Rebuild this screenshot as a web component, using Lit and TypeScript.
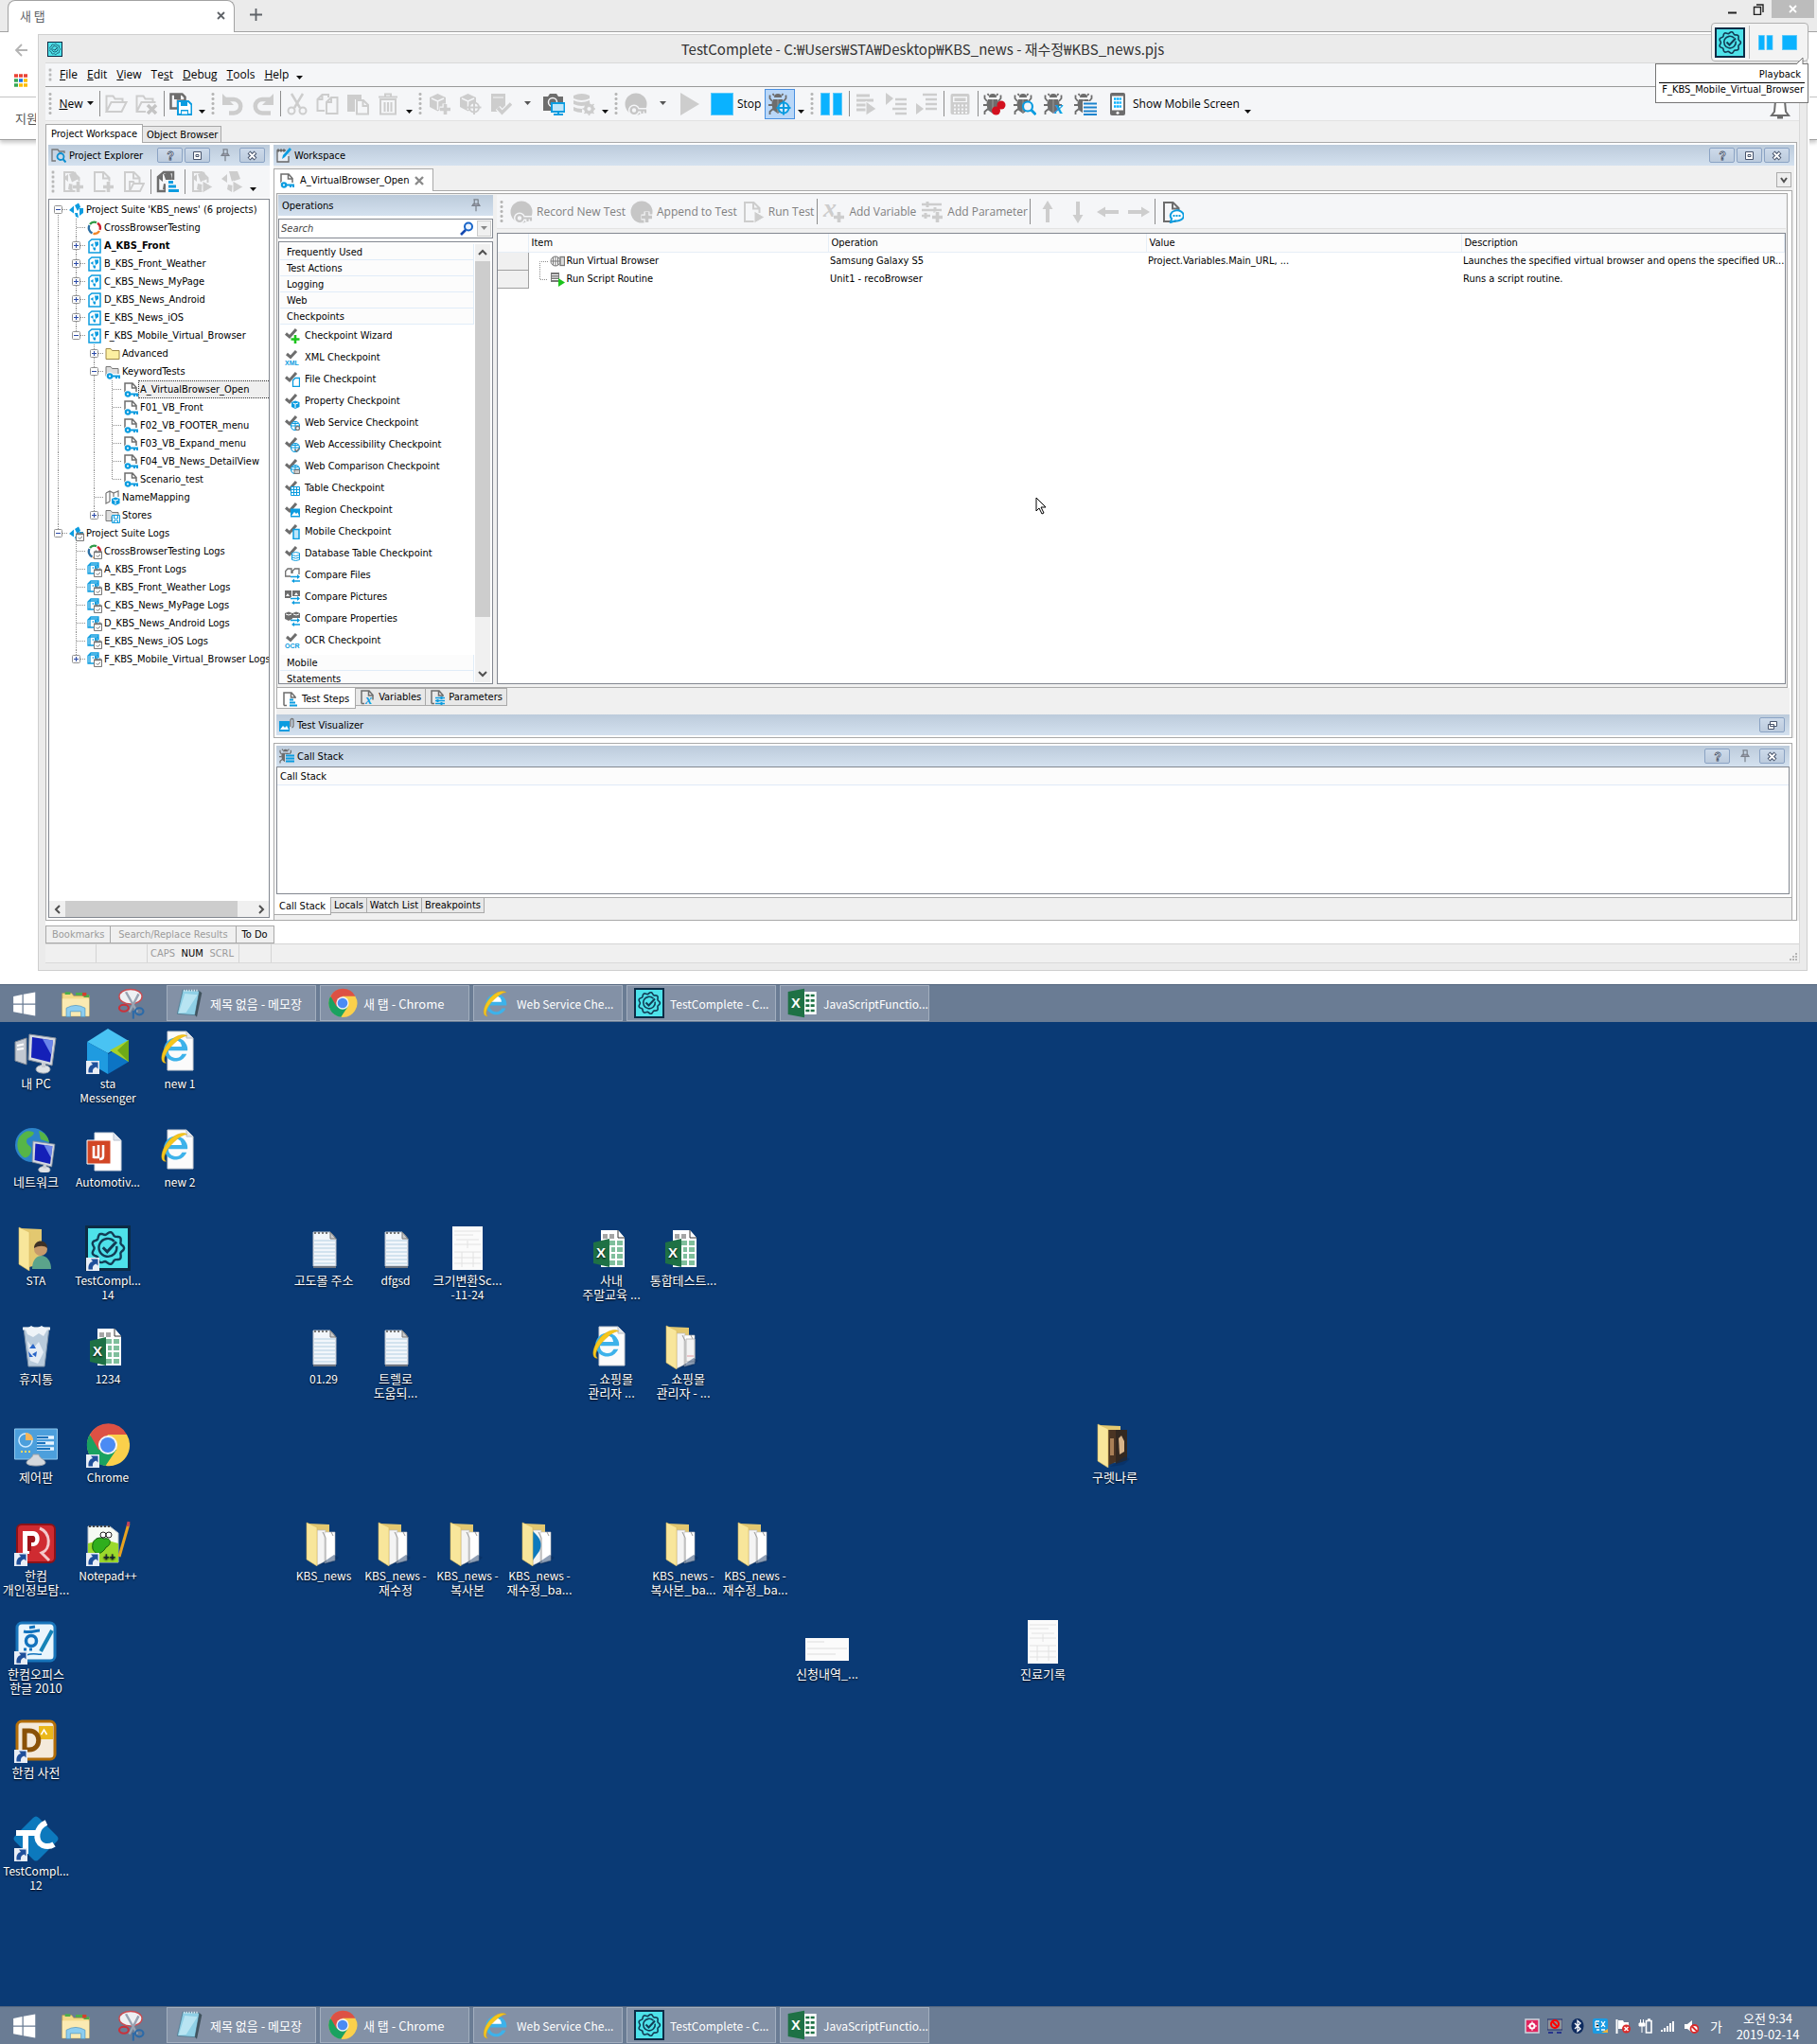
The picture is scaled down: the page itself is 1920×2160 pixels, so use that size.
import { LitElement, html, svg, css, nothing, TemplateResult } from "lit";
import { customElement } from "lit/decorators.js";
import { classMap } from "lit/directives/class-map.js";

const OFF = "#cdcdcd";
const DARK = "#6d6d6d";
const BLUE = "#0b9ce0";

/* ---------- drawing helpers ---------- */

const draw = (content: unknown, size = 24, box = size) =>
  html`<svg class="ico" width=${size} height=${size} viewBox="0 0 ${box} ${box}" aria-hidden="true">${content}</svg>`;

const latin = (text: string) => !/[\uac00-\ud7a3]/.test(text);

const wave = (c: number, r: number, amp: number, lobes: number) => {
  const pts: string[] = [];
  for (let i = 0; i < 96; i++) {
    const t = (i / 96) * Math.PI * 2;
    const k = r + amp * Math.cos(lobes * t);
    pts.push(`${(c + k * Math.cos(t)).toFixed(1)} ${(c + k * Math.sin(t)).toFixed(1)}`);
  }
  return `M${pts.join("L")}Z`;
};

const badge = svg`
  <rect x="1" y="1" width="30" height="30" fill="#4ee2ea" stroke="#0c2b45" stroke-width="2"/>
  <path d=${wave(16, 10.5, 0.9, 9)} fill="none" stroke="#123c55" stroke-width="1.6"/>
  <path d="M20.5 11.2a6.3 6.3 0 1 0 1.7 3.4" fill="none" stroke="#123c55" stroke-width="1.6"/>
  <path d="M12.5 15.5l3 3 6.5-7" fill="none" stroke="#123c55" stroke-width="2"/>`;

const key = (c: string, halo = "#f5f6f8") => svg`
  <path d="M12 18.5h11M18.5 18.5v4M22 18.5v3.5" stroke=${halo} stroke-width="5" fill="none"/>
  <circle cx="10" cy="18.5" r="3.6" fill=${halo} stroke=${halo} stroke-width="5"/>
  <circle cx="10" cy="18.5" r="3.4" fill="none" stroke=${c} stroke-width="2.4"/>
  <path d="M13 18.5h10M18.5 18.5v3.5M22 18.5v3" stroke=${c} stroke-width="2.2" fill="none"/>`;
const page = (c: string) => svg`<path d="M15.5 22H3V2h9.500l6 6v5M12 2.500v6h6" fill="none" stroke=${c} stroke-width="2"/>`;
const plus = (c: string) => svg`<path d="M17.500 11.500v12M11.500 17.500h12" stroke="#f5f6f8" stroke-width="6"/><path d="M17.500 12v11M12 17.500h11" stroke=${c} stroke-width="3.600"/>`;
const play = (c: string) => svg`<path d="M13 11l11 6.500-11 6.500z" fill=${c} stroke="#f5f6f8"/>`;
const cube = (c: string) => svg`<path d="M9.500 1l8.500 4v10l-8.500 4.500L1 15V5z" fill=${c}/><path d="M3 6l6.500 3L16 6M9.500 9v9" stroke="#f5f6f8" stroke-width="1.500" fill="none"/>`;
const flow = (c: string) => svg`<path d="M2 8l5-4v8zM8 4l7-2.500 2 8-6 3z" fill=${c}/><path d="M8 14l5 1-1 7-5-2z" fill=${c}/>`;
const bug = svg`<g fill="#6d6d6d"><path d="M6 5a4 4 0 0 1 8 0zM5 7h10l1.500 4-1 7-5.500 4-5.500-4-1-7z"/></g>
  <path d="M4 9L1.500 6V2.500M16 9l2.500-3V2.500M4 13H0M16 13h3M5 17l-3.500 3v3M6 3L4.500 1M14 3l1.500-2" stroke="#6d6d6d" stroke-width="1.800" fill="none"/><path d="M10 7v15" stroke="#9c9c9c"/>`;
const letterX = (c: string) => svg`<text x="11" y="22" font-family="Liberation Serif, serif" font-size="19" font-style="italic" font-weight="700" fill=${c}>x</text>`;
const steps = svg`<path d="M11 11h8v3h-8zM11 15h10v3h-10zM11 19.500h13v3.500h-13z" fill="#f5f6f8" stroke="#f5f6f8" stroke-width="2"/><path d="M13 11h5v3h-5zM13 15.500h8v3h-8zM13 20h11v3h-11z" fill="#0b9ce0"/>`;
const bars = (c: string) => svg`<path d="M2 3h14M2 8h18M2 13h12M2 18h10" stroke=${c} stroke-width="3"/>`;

const tool: Record<string, unknown> = {
  open: svg`<path d="M1.500 20V3.500h7l2 3h8V10M1.500 20l5-10h16l-5 10z" fill="none" stroke="#cdcdcd" stroke-width="2"/>`,
  closeSuite: svg`<path d="M11 20H1.500V3.500h7l2 3h8V10M1.500 20l5-10h15" fill="none" stroke="#cdcdcd" stroke-width="2"/><path d="M13 13l9 9M22 13l-9 9" stroke="#c4c4c4" stroke-width="3.500"/>`,
  save: svg`<path d="M1.500 1.500h12l3 3v4H9v8H1.500z" fill="none" stroke="#6d6d6d" stroke-width="2.500"/><path d="M5 1h7v6H5z" fill="#6d6d6d"/><path d="M9 9h11l3.500 3.500V23H9z" fill="#fff" stroke="#0b9ce0" stroke-width="2"/><path d="M12 9h7v5h-7zM12 18h8v5h-8z" fill="#0b9ce0"/><path d="M13 19.500h6v3h-6z" fill="#fff"/>`,
  undo: svg`<path d="M4 7h9a7 7 0 0 1 0 14.500H8" fill="none" stroke="#cdcdcd" stroke-width="4.500"/><path d="M1 1v12h12z" fill="#cdcdcd"/>`,
  redo: svg`<path d="M20 7H11a7 7 0 0 0 0 14.500h9" fill="none" stroke="#cdcdcd" stroke-width="4.500"/><path d="M23 1v12H11z" fill="#cdcdcd"/>`,
  cut: svg`<path d="M6 1l9 15M18 1L9 16" stroke="#cdcdcd" stroke-width="2.500"/><circle cx="6" cy="19" r="3.500" fill="none" stroke="#cdcdcd" stroke-width="2"/><circle cx="18" cy="19" r="3.500" fill="none" stroke="#cdcdcd" stroke-width="2"/>`,
  copy: svg`<path d="M9 19H1.500V7l5-5H13v3M6.500 2v5h-5M11 22V10l5-5h6.500v17zM16 5v5h-5" fill="none" stroke="#cdcdcd" stroke-width="2"/>`,
  paste: svg`<path d="M1 2h15v5h-7v13H1z" fill="#cdcdcd"/><path d="M11 8h7l5 5v9.500H11zM17.500 8.500V14h5" fill="#f5f6f8" stroke="#cdcdcd" stroke-width="2"/>`,
  trash: svg`<path d="M4 7h16v15.500H4zM8.500 10v10M12 10v10M15.500 10v10M2 4.500h20M9 4V1.500h6V4" fill="none" stroke="#cdcdcd" stroke-width="2"/>`,
  cubeAdd: svg`${cube(OFF)}${plus(OFF)}`,
  cubeSpy: svg`${cube(OFF)}<circle cx="16" cy="15.500" r="5" fill="#f5f6f8" stroke="#cdcdcd" stroke-width="2"/><path d="M16 8v15M8.500 15.500h15" stroke="#cdcdcd" stroke-width="2"/>`,
  pageCheck: svg`<path d="M2 1h15v19H2z" fill="#cdcdcd"/><path d="M4 5h11" stroke="#f5f6f8"/><path d="M9 16l4.500 5L23 11.500" fill="none" stroke="#f5f6f8" stroke-width="6"/><path d="M9 16l4.500 5L23 11.500" fill="none" stroke="#cdcdcd" stroke-width="3.500"/>`,
  camera: svg`<path d="M1 4h5l2-3h7l2 3h5v6H9v9H1z" fill="#6d6d6d"/><circle cx="11" cy="10" r="4.500" fill="none" stroke="#f5f6f8" stroke-width="1.500"/><path d="M10 11h13.500v9H10z" fill="#bfe6fa" stroke="#0b9ce0" stroke-width="2"/><path d="M17 20v2.500M12 23h10" stroke="#0b9ce0" stroke-width="2"/>`,
  dbGear: svg`<path d="M1 3q9-4 17 0v3q-8 4-17 0zM1 8q8 4 17 0v4q-8 4-17 0zM1 15q4 2 9 2v4q-5 0-9-2z" fill="#cdcdcd"/><circle cx="17.500" cy="17" r="4" fill="#f5f6f8" stroke="#cdcdcd" stroke-width="3"/><path d="M17.500 10v14M10.500 17h14M12.500 12l10 10M22.500 12l-10 10" stroke="#cdcdcd" stroke-width="1.600"/><circle cx="17.500" cy="17" r="2" fill="#f5f6f8"/>`,
  record: svg`<circle cx="12" cy="12" r="11.500" fill="#c6c6c6"/>${key("#c6c6c6")}`,
  append: svg`<circle cx="12" cy="12" r="11.500" fill="#c6c6c6"/>${plus("#c6c6c6")}`,
  play: svg`<path d="M3 0l20 12L3 24z" fill="#cdcdcd"/>`,
  stop: svg`<rect x=".5" y=".5" width="23" height="23" fill="#0ab2ff" stroke="#5cc9fb"/>`,
  pause: svg`<rect x=".5" y=".5" width="9" height="23" fill="#0ab2ff" stroke="#5cc9fb"/><rect x="13.500" y=".5" width="9" height="23" fill="#0ab2ff" stroke="#5cc9fb"/>`,
  bugSpy: svg`${bug}<circle cx="16" cy="16" r="5.500" fill="#d7eafa" stroke="#0b9ce0" stroke-width="2"/><path d="M16 8.500v15M8.500 16h15" stroke="#0b9ce0" stroke-width="2"/>`,
  stepOver: svg`${bars(OFF)}<path d="M12 9l11 8-11 7z" fill="#cdcdcd" stroke="#f5f6f8"/>`,
  stepInto: svg`<path d="M11 7h12M11 12h12M8 17h15M11 22h12" stroke="#cdcdcd" stroke-width="2.500"/><path d="M1 0l8 6-8 7z" fill="#cdcdcd"/>`,
  stepOut: svg`<path d="M8 2h15M11 7h12M11 12h12M11 17h12" stroke="#cdcdcd" stroke-width="2.500"/><path d="M1 11l8 6-8 6z" fill="#cdcdcd"/>`,
  calc: svg`<rect x="1.500" y="1" width="20" height="22" rx="2" fill="#cdcdcd"/><path d="M4 4h15v6H4z" fill="#f5f6f8"/><path d="M5.500 5.500h12V9h-12z" fill="#cdcdcd"/><path d="M5 13.500h14M5 17.500h14M5 21h14" stroke="#f5f6f8" stroke-width="2" stroke-dasharray="2 2"/>`,
  bugStop: svg`${bug}<circle cx="19" cy="13" r="4.500" fill="#d3101f"/><circle cx="13.500" cy="19" r="4.500" fill="#d3101f"/>`,
  bugFind: svg`${bug}<circle cx="15" cy="14.500" r="5" fill="#f5f6f8" stroke="#0b9ce0" stroke-width="2.200"/><path d="M18.500 18l5 5" stroke="#0b9ce0" stroke-width="3"/>`,
  bugVar: svg`${bug}${letterX(BLUE)}`,
  bugList: svg`${bug}<path d="M9 9h15v15H9z" fill="#f5f6f8"/><path d="M10 11.500h14M10 15.500h14M10 19.500h14M10 23h14" stroke="#1c83cd" stroke-width="2.200"/>`,
  phone: svg`<rect x="4" y="0" width="16" height="24" rx="2" fill="#6d6d6d"/><path d="M6 3.500h12v15H6z" fill="#fff"/><path d="M8 6.500h8M8 10.500h8M8 14.500h8" stroke="#0ab2ff" stroke-width="2.500" stroke-dasharray="2.500 .6"/><circle cx="12" cy="21.300" r="1.500" fill="#fff"/>`,
  bell: svg`<path d="M3 19h18l-3-4-1-11H7L6 15z" fill="#fff" stroke="#6d6d6d" stroke-width="2"/><path d="M9 20h6v2.500H9z" fill="#6d6d6d"/>`,
  suiteAdd: svg`${page(OFF)}${flow(OFF)}${plus(OFF)}`,
  itemAdd: svg`${page(OFF)}${plus(OFF)}`,
  itemOpen: svg`${page(OFF)}<path d="M8 22l4-8h11l-4 8zM8 21v-9h4l1 2h7" fill="#f5f6f8" stroke="#cdcdcd" stroke-width="1.800"/>`,
  suiteSteps: svg`<path d="M12 22H2V7l6-5h10v8" fill="none" stroke="#6d6d6d" stroke-width="2.500"/>${flow(DARK)}${steps}`,
  suiteRun: svg`${page(OFF)}${flow(OFF)}${play(OFF)}`,
  flowRun: svg`<path d="M1 9l6-5v9zM9 1h9l3 8-9 3zM8 15l5 1-1 7-5-3z" fill="#cdcdcd"/>${play(OFF)}`,
  pageRun: svg`${page(OFF)}${play(OFF)}`,
  varAdd: svg`<text x="1" y="17" font-family="Liberation Serif, serif" font-size="28" font-style="italic" font-weight="700" fill="#cdcdcd">x</text>${plus(OFF)}`,
  parAdd: svg`<path d="M1 4h21M1 10h21M1 16h9" stroke="#cdcdcd" stroke-width="2.500"/><path d="M7 1v6M15 7v6M5 13v6" stroke="#cdcdcd" stroke-width="3"/>${plus(OFF)}`,
  up: svg`<path d="M12 23V7" stroke="#cdcdcd" stroke-width="4"/><path d="M6.500 9L12 0l5.500 9z" fill="#cdcdcd"/>`,
  down: svg`<path d="M12 1v16" stroke="#cdcdcd" stroke-width="4"/><path d="M6.500 15l5.500 9 5.500-9z" fill="#cdcdcd"/>`,
  left: svg`<path d="M6 12h17" stroke="#cdcdcd" stroke-width="4"/><path d="M9 6.500L0 12l9 5.500z" fill="#cdcdcd"/>`,
  right: svg`<path d="M1 12h17" stroke="#cdcdcd" stroke-width="4"/><path d="M15 6.500l9 5.500-9 5.500z" fill="#cdcdcd"/>`,
  pageTalk: svg`${page(DARK)}<path d="M10 23l1-4a7 5.500 0 1 1 4 2.200z" fill="#fff" stroke="#0b9ce0" stroke-width="2"/><path d="M12.500 16h8" stroke="#0b9ce0" stroke-width="2" stroke-dasharray="2 1"/>`,
};

const swirl = svg`<path d="M0 8l5-4.500v8zM6 3l4-2.500 2 4-3 4.500zM11 6h4v5l-4 3zM6 11h3l1 5-3-1z" fill="#0b9ce0"/>`;
const key16 = svg`<g fill="none"><path d="M2 12.500h14" stroke="#fff" stroke-width="5"/><circle cx="5" cy="12.500" r="2.300" fill="#fff" stroke="#fff" stroke-width="4"/><circle cx="5" cy="12.500" r="2.200" fill="#fff" stroke="#0b9ce0" stroke-width="2.200"/><path d="M7.500 12.500H16M12 12.500V15M15 12.500V15" stroke="#0b9ce0" stroke-width="2"/></g>`;
const tick16 = svg`<path d="M1 5.500l4 3.500 7-8" fill="none" stroke="#6d6d6d" stroke-width="3"/>`;
const swap16 = svg`<path d="M6 9.500h9M8 14h8" stroke="#0b9ce0" stroke-width="1.600"/><path d="M13 7l3 2.500-3 2.500zM10 11.500L7 14l3 2z" fill="#0b9ce0"/>`;
const mapBox = svg`<path d="M7 9l4-1.500L15.500 9v5L11 16l-4-2z" fill="#0b9ce0"/><path d="M8.500 10l2.500 1 3-1M11 11v4" stroke="#fff" fill="none"/>`;
const calBox = svg`<path d="M7.500 8h8v7.500h-8z" fill="#fff" stroke="#777"/><path d="M7 8.500h9M9.500 6.500v2M13.500 6.500v2" stroke="#777" stroke-width="1.500"/><path d="M9.500 12l1.500 1.500 3-2.500" fill="none" stroke="#777"/>`;
const page16 = svg`<path d="M2 14.500V1h8l4 4.500v5M9.500 1v5H14M2 14.500h3" fill="none" stroke="#6d6d6d" stroke-width="1.500"/>`;
const globe16 = svg`<circle cx="11" cy="11" r="4.500" fill="#fff" stroke="#0b9ce0" stroke-width="1.200"/><path d="M6.500 11h9M11 6.500v9M7.500 8.500h7" stroke="#0b9ce0" fill="none"/>`;
const ring = svg`<g fill="none" stroke-width="2.400"><path d="M3 4a6 6 0 0 1 7-1.800" stroke="#2f9a48"/><path d="M11 2.800a6 6 0 0 1 2.500 7" stroke="#cf2030"/><path d="M13 11a6 6 0 0 1-6.500 2.800" stroke="#f0862a"/><path d="M5.500 13.300A6 6 0 0 1 2.500 5" stroke="#2b6fa4"/></g>`;

const small: Record<string, unknown> = {
  suite: swirl,
  ring,
  project: svg`<path d="M2 15V3.500L5 1h9v14z" fill="#fff" stroke="#0b9ce0" stroke-width="1.500"/><path d="M3.500 7l3-2v4zM8 3.500h4V7L9 9zM6 9.500h3v3H7z" fill="#0b9ce0"/>`,
  folder: svg`<path d="M1 13.500v-11h5l1.500 2H15v9z" fill="#fcefa1" stroke="#a08a4a"/>`,
  keyFolder: svg`<path d="M1 12.500v-10h5l1.500 2H14v6" fill="#ddd" stroke="#777"/>${key16}`,
  keyPage: svg`${page16}${key16}`,
  mapping: svg`<path d="M1 3l4-2 4 2 5-2v6M5 1v11M9 3v4M1 3v11l4-2" fill="none" stroke="#777" stroke-width="1.200"/>${mapBox}`,
  stores: svg`<path d="M1 13.500v-11h5l1.500 2H14v4H7v5z" fill="#ddd" stroke="#777"/><path d="M7.500 7.500h8v8h-8z" fill="#fff" stroke="#0b9ce0"/><path d="M9.500 8v3h4V8M9.500 15v-2h4v2" fill="none" stroke="#0b9ce0"/>`,
  suiteLog: svg`${swirl}${calBox}`,
  ringLog: svg`${ring}${calBox}`,
  projectLog: svg`<path d="M4 12H1V4l3-3h8v5M3 3h8v9H3z" fill="#fff" stroke="#0b9ce0" stroke-width="1.300"/><path d="M5 6l2-1v2zM8 4h2v3H8z" fill="#0b9ce0"/>${calBox}`,
  cpWizard: svg`${tick16}<path d="M11 7v9M6.500 11.500h9" stroke="#1cc41c" stroke-width="2.600"/>`,
  cpXml: svg`<path d="M2 4l4 3.500L12 1" fill="none" stroke="#6d6d6d" stroke-width="3"/><text x="0" y="16" font-family="Liberation Sans, sans-serif" font-size="7" font-weight="700" fill="#0b9ce0">XML</text>`,
  cpOcr: svg`<path d="M2 4l4 3.500L12 1" fill="none" stroke="#6d6d6d" stroke-width="3"/><text x="0" y="16" font-family="Liberation Sans, sans-serif" font-size="7" font-weight="700" fill="#0b9ce0">OCR</text>`,
  cpFile: svg`${tick16}<path d="M8.500 15.500V9L11 6.500h4.500v9z" fill="#fff" stroke="#0b9ce0" stroke-width="1.300"/>`,
  cpProp: svg`${tick16}${mapBox}`,
  cpWeb: svg`${tick16}${globe16}<circle cx="13.500" cy="13.500" r="2" fill="#fff" stroke="#777" stroke-width="1.300"/>`,
  cpAccess: svg`${tick16}${globe16}<path d="M10.500 13l2 2 3-3.500" fill="none" stroke="#777" stroke-width="1.500"/>`,
  cpCompare: svg`${tick16}${globe16}<path d="M10 11.500h5.500v4H10z" fill="#ccc" stroke="#777"/>`,
  cpTable: svg`${tick16}<path d="M6.500 6.500h9v9h-9zM6.500 9.500h9M6.500 12.500h9M9.500 6.500v9M12.500 6.500v9" fill="#fff" stroke="#0b9ce0"/>`,
  cpRegion: svg`${tick16}<path d="M6 6.500h10v9H6z" fill="#0b9ce0"/><path d="M7 14l3-4 2 2 1.500-1.500L15 14z" fill="#fff"/>`,
  cpMobile: svg`${tick16}<rect x="9" y="5.500" width="6" height="10" fill="#bfe6fa" stroke="#0b9ce0" stroke-width="1.500"/>`,
  cpDb: svg`${tick16}<path d="M7.500 7.500q4-2 8 0v7q-4 2-8 0zM7.500 9.500q4 2 8 0M7.500 12q4 2 8 0" fill="#fff" stroke="#0b9ce0"/>`,
  cmpFiles: svg`<path d="M6 9H.7V3.500L3 1h4v5M8 6V3.500L10.500 1H15v6" fill="none" stroke="#6d6d6d" stroke-width="1.300"/>${swap16}`,
  cmpPics: svg`<path d="M0 1h7v8H0zM8 1h8v6H8z" fill="#6d6d6d"/><path d="M1 7l2-3 2 3zM10 6l2-3 2 3z" fill="#fff"/><path d="M6 8h10v8H6z" fill="#fff"/>${swap16}`,
  cmpProps: svg`<path d="M0 2l4-1.500L8 2v6l-4 2-4-2zM8 2l4-1.500L16 2v5H8z" fill="#6d6d6d"/><path d="M1 3l3 1 3-1M9 3l3 1 3-1" stroke="#fff" fill="none"/>${swap16}`,
  steps: svg`${page16}<path d="M7 7h10v9H7z" fill="#fff"/><path d="M8 8.500h4M8 11.500h6M8 14.500h8" stroke="#0b9ce0" stroke-width="2"/>`,
  vars: svg`${page16}<text x="6" y="15" font-family="Liberation Serif, serif" font-size="14" font-style="italic" font-weight="700" fill="#0b9ce0">x</text>`,
  params: svg`${page16}<path d="M6 7h10v9H6z" fill="#eee"/><path d="M6 8.500h10M6 11.500h10M6 14.500h10" stroke="#0b9ce0" stroke-width="1.300"/><path d="M12.500 7v3M8.500 10v3M12.500 13v3" stroke="#0b9ce0" stroke-width="2"/>`,
  explorer: svg`<path d="M5 14H1V2h6l1.500 2H14v2" fill="none" stroke="#777" stroke-width="1.300"/><circle cx="10" cy="9.500" r="3.500" fill="none" stroke="#0b8fd0" stroke-width="1.800"/><path d="M12.500 12l3 3.500" stroke="#0b8fd0" stroke-width="2"/>`,
  edit: svg`<path d="M10 3H1v12h12V9" fill="#e9eef4" stroke="#666" stroke-width="1.300"/><path d="M1 3h9" stroke="#666" stroke-width="3" stroke-dasharray="2 1"/><path d="M6 12l1-4 7-8 2 2-7 8z" fill="#0b9ce0"/>`,
  visual: svg`<path d="M0 4h11v11H0z" fill="#0b9ce0"/><path d="M1 13l3-4 2 2 2-2 2 4z" fill="#fff"/><path d="M12 10V3a1.500 1.500 0 0 1 3 0v6a3 3 0 0 1-1.500 2" fill="none" stroke="#777" stroke-width="1.300"/>`,
  bugList: svg`<g transform="scale(.67)">${bug}</g><path d="M6 6h10v10H6z" fill="#ccd9e7"/><path d="M7 7.500h9M7 10.500h9M7 13.500h9" stroke="#0b9ce0" stroke-width="2"/>`,
  rowWeb: svg`<circle cx="6" cy="8" r="5" fill="none" stroke="#777"/><path d="M1 8h10M6 3v10M3.500 4v8M8.500 4v8" stroke="#777"/><rect x="11" y="3.500" width="4.500" height="9" fill="#ddd" stroke="#777" stroke-width="1.300"/>`,
  rowScript: svg`<path d="M1 1h9v10H1z" fill="#777"/><path d="M2 3.500h7M2 6h7M2 8.500h7" stroke="#fff"/><path d="M9 7l7 4.500L9 16z" fill="#1cc41c"/>`,
  pin: svg`<path d="M5 1h6M6 1v6M10.500 1v6M3.500 8.500h9L11 6H5zM8 9v6" fill="#aab" stroke="#7b828c" stroke-width="1.400"/>`,
  lens: svg`<circle cx="10" cy="5.500" r="4" fill="#eaf3ff" stroke="#1764c8" stroke-width="2"/><path d="M7 9l-5 5" stroke="#1448b0" stroke-width="2.600"/>`,
};

/* ---------- desktop art, 48 unit box ---------- */

const shortcut = svg`<path d="M1 34h14v14H1z" fill="#e9eef6"/><path d="M3.500 46.500c-.500-4.500 1-7.500 4.500-8.500l-2-2.500h7.500v7l-2-2c-3 1-4 3-3.500 6z" fill="#1f4f9a"/>`;
const chrome = svg`
  <circle cx="24" cy="24" r="22" fill="#fbd04b"/>
  <path d="M4.500 13.500a22 22 0 0 0 17 32.500L33 29l-9-3z" fill="#1aa260"/>
  <path d="M33.500 29L22 46a22 22 0 0 0 22-33H24z" fill="#fbd04b"/>
  <path d="M24 13h20A22 22 0 0 0 5 13l9.500 16.500z" fill="#dd5144"/>
  <circle cx="24" cy="24" r="10" fill="#f4f4f4"/><circle cx="24" cy="24" r="8" fill="#4b8bf4"/>`;
const ie = svg`
  <path d="M38 26H15a9 9 0 0 0 17 4h5.500A14.500 14.500 0 1 1 38.500 26z" fill="#3db2ea"/>
  <path d="M15.500 21h16a8 8 0 0 0-16 0z" fill="#fff"/>
  <path d="M38 8c-5-4-17 0-25 11S5 42 12 41c-5-3 0-14 8-22S35 7 38 8z" fill="#f6c71c" stroke="#e0a80e" stroke-width=".6"/>`;
const sheet = svg`<path d="M11 3h20l7 7v34H11z" fill="#fbfbfb" stroke="#c9cdd4"/><path d="M31 3v7h7" fill="#e3e6ea" stroke="#b8bcc4"/>`;
const excel = svg`<path d="M13 5h18l7 8v31H13z" fill="#fff"/><path d="M31 5v8h7" fill="#fff" stroke="#333"/>
  <path d="M15 9h5v5h-5zM22 9h5v5h-5z" fill="#a5a5a5"/>
  <path d="M21 16h7v5h-7zM30 16h6v5h-6zM24 23h4v5h-4zM30 23h6v5h-6zM24 30h4v5h-4zM30 30h6v5h-6zM21 37h7v5h-7zM30 37h6v5h-6z" fill="#7fbf9c"/>
  <path d="M5 18l17-4v30L5 40z" fill="#1e7145"/><text x="8" y="34" font-family="Liberation Sans, sans-serif" font-size="15" font-weight="700" fill="#fff">X</text>`;
const folderArt = (inner: unknown) => svg`<g transform="translate(-4 0)">
  <path d="M12 3l22 1v37l-18 4z" fill="#e3c870"/>${inner}
  <path d="M10 2l11 5v41l-11-7z" fill="#f8e69b" stroke="#d8bb60" stroke-width=".6"/><path d="M39 36l5 3-7 6-14 2z" fill="#062a5c" opacity=".45"/></g>`;
const papers = svg`<path d="M21 10h9v33l-9 4z" fill="#f4f4f4" stroke="#bbb" stroke-width=".6"/><path d="M29 12h11v30l-11 3z" fill="#fff" stroke="#bbb" stroke-width=".6"/><path d="M27 12l3 6v26M36 12l2 4" fill="none" stroke="#999"/>`;
const notes = svg`<path d="M13 7h18l6 7v29H13z" fill="#f2f6fb" stroke="#b7bfca"/><path d="M14 16h22M14 20h22M14 24h22M14 28h22M14 32h22M14 36h22M14 40h22" stroke="#b3cfe2"/><path d="M13 44h24" stroke="#6f7681" stroke-width="2"/><path d="M31 7v7h6z" fill="#ccc" stroke="#777"/><path d="M14 8h16" stroke="#777" stroke-width="2" stroke-dasharray="2 2"/>`;
const monitor = svg`<path d="M17 6l28 4-4 29-25-6z" fill="#d4d9e0" stroke="#868e9a"/><path d="M20 9l22 3.500-3 23-20-5z" fill="#1420b8"/><path d="M31 11l11 1.500-2 15z" fill="#8fb0ff" opacity=".7"/><path d="M24 43c0-6 15-6 15 0s-15 5-15 0z" fill="#dfe2e6" stroke="#9aa1ab"/><path d="M30 36h4v5h-4z" fill="#c8ccd3"/>`;

const big: Record<string, unknown> = {
  pc: svg`<path d="M2 14l12-4v28L2 34z" fill="#c3c9d2" stroke="#7f8793"/><path d="M4 18l7-1.500M4 22l7-1" stroke="#fff" stroke-width="2"/>${monitor}`,
  network: svg`<circle cx="20" cy="19" r="18" fill="#2c83c9"/><path d="M6 11c6-8 12-8 16-5-2 6-8 4-8 9s6 4 5 10-5 8-8 7C4 27 3 18 6 11zM27 4c7 2 10 7 11 12l-9-3z" fill="#56b547"/><g transform="translate(7 10) scale(.82)">${monitor}</g>`,
  user: svg`${folderArt(nothing)}<path d="M20 46c0-10 5-14 10-14s10 5 10 14z" fill="#5ba48b"/><circle cx="29" cy="25" r="7" fill="#c79a6b"/><path d="M22 24c0-10 14-10 14 0-3-3-9-3-14 0z" fill="#3d3126"/>`,
  bin: svg`<path d="M11 4h27l-5 41H16z" fill="#b9cbdc" stroke="#7e92a8"/><path d="M10 5h29" stroke="#e9eef3" stroke-width="3"/><path d="M13 6l6-4 5 3 6-3 6 4-4 7-5-3-6 4-6-3z" fill="#eef3f8"/><path d="M15 18l6 8 6-7 5 11-6 12-8-3z" fill="#e6edf5"/><path d="M17 26l4-5 3 5zM16 29l5 6h-4zM25 29l-1 6-4-3z" fill="#2b66c8"/>`,
  control: svg`<path d="M1.500 7h45v32h-45z" fill="#4c9fdc" stroke="#8ec8ef"/><circle cx="13" cy="19" r="7" fill="none" stroke="#cfeaff" stroke-width="1.500"/><path d="M13 19v-8a8 8 0 0 1 8 8z" fill="#f6b65b"/><path d="M25 16h18M25 22h18M25 28h18" stroke="#e6f4ff" stroke-width="3.500"/><path d="M25 16h12M25 22h9M25 28h14" stroke="#1b73bd" stroke-width="1.800"/><path d="M8 31h12" stroke="#ffd95e" stroke-width="2" stroke-dasharray="2 2"/><path d="M14 43c0-4 6-4 7-9h6c1 5 7 5 7 9s-20 4-20 0z" fill="#d4d8dd" stroke="#9aa1ab"/>`,
  hancomP: svg`<rect x="4" y="4" width="40" height="40" rx="5" fill="#cf2b31" stroke="#8c1218" stroke-width="2"/><path d="M10 11h11c9 0 9 16 0 16h-4v8h-7z" fill="#fff"/><path d="M15 16h6c3 0 3 7 0 7h-2v9h-4z" fill="#9e1319"/><path d="M28 8c12 5 12 22 2 26l8 8" fill="none" stroke="#f4c9cb" stroke-width="3"/>${shortcut}`,
  hangul: svg`<rect x="4" y="4" width="40" height="40" rx="5" fill="#eaf6fd" stroke="#1875bb" stroke-width="3"/><circle cx="19" cy="23" r="5.500" fill="none" stroke="#1273bd" stroke-width="3.500"/><path d="M11 13c8 2 12-1 17-1M17 9l6-1" stroke="#1273bd" stroke-width="3" fill="none"/><path d="M11 32h3M17 32h3" stroke="#1273bd" stroke-width="3"/><path d="M29 34l12-22" stroke="#1584b8" stroke-width="4"/><path d="M14 38c8-3 12 0 16-1" stroke="#1273bd" fill="none" stroke-width="1.500"/>${shortcut}`,
  dict: svg`<rect x="4" y="4" width="40" height="40" rx="5" fill="#f4eadb" stroke="#b26d08" stroke-width="3"/><path d="M27 9h15v14H27z" fill="#eab71b"/><path d="M29.500 18l3-5 3 5" fill="none" stroke="#fff" stroke-width="1.500"/><path d="M12 14h5c13 0 13 20 0 20h-5z" fill="none" stroke="#8a5208" stroke-width="5"/>${shortcut}`,
  tc12: svg`<path d="M21 2q3-3 6 0l19 19q3 3 0 6L27 46q-3 3-6 0L2 27q-3-3 0-6z" fill="#0c79bd"/><path d="M3 18h21M13 18v22" stroke="#fff" stroke-width="6"/><path d="M35 7c-11 5-13 19-4 24 5 2 9 1 12-1" fill="none" stroke="#fff" stroke-width="6"/>${shortcut}`,
  sta: svg`<path d="M24 0l22 13-22 13L2 14z" fill="#49c3f3"/><path d="M2 14l22 12v22L2 35z" fill="#1f9be0"/><path d="M46 14L24 27v21l22-13z" fill="#0c74c4"/><path d="M46 12v23L26 23z" fill="#a6d12b"/><path d="M46 12v23L34 23z" fill="#6faa17"/>${shortcut}`,
  ppt: svg`<path d="M10 6h20l8 8v32H10z" fill="#fff" stroke="#cdd3dc"/><path d="M30 6v8h8" fill="#dfe5ee" stroke="#b9c2d0"/><path d="M2 14h25v25H2z" fill="#d24625" stroke="#fff"/><path d="M9 20v13M9 32h5V19M19 19v12q0 3-4 3" stroke="#fff" stroke-width="2.600" fill="none"/>`,
  tc14: svg`<g transform="scale(1.5)">${badge}</g>${shortcut}`,
  excel,
  chrome: svg`${chrome}${shortcut}`,
  npp: svg`<path d="M3 6h23l9 7v31H3z" fill="#f6faf3" stroke="#b7bfca"/><path d="M4 6h22" stroke="#444" stroke-width="2" stroke-dasharray="2 2"/><path d="M3 24q16-6 32 0v20H3z" fill="#9bd92c"/><path d="M8 30c-2-10 6-14 12-11 8-2 8 7 2 9-3 6-10 10-14 2z" fill="#2fae1d" stroke="#0f5b0c"/><circle cx="19" cy="15" r="3" fill="#fff" stroke="#222"/><circle cx="25" cy="15" r="3" fill="#fff" stroke="#222"/><path d="M46 3L36 38" stroke="#e8a320" stroke-width="3"/><path d="M46 1l-1 5" stroke="#c4425a" stroke-width="3"/><text x="19" y="42" font-family="Liberation Sans, sans-serif" font-size="11" font-weight="700" fill="#123">++</text>${shortcut}`,
  web: svg`${sheet}<g transform="translate(-1 1) scale(.86)">${ie}</g>`,
  notes,
  scan: svg`<path d="M8 1h32v46H8z" fill="#fbfbfb"/><path d="M10 6h28M10 10h20M12 15h24M10 20h28M24 16v8M10 28h28M10 34h28M10 40h28M18 28v16M30 28v16" stroke="#e2e2e2"/>`,
  wide: svg`<path d="M1 20h46v24H1z" fill="#fbfbfb"/><path d="M3 24h18M3 31h42M3 37h30" stroke="#ddd"/>`,
  folder: folderArt(papers),
  folderShop: folderArt(svg`${papers}<path d="M31 16h9v24h-9z" fill="#f3f3f3" stroke="#bbb"/><path d="M32 34h7" stroke="#e39aa2"/>`),
  folderBlue: folderArt(svg`${papers}<path d="M21 11c9 8 10 14 7 21l-7 10z" fill="#0c79bd"/>`),
  folderPhoto: folderArt(svg`<path d="M20 8h9v34l-9 4z" fill="#4a3423"/><path d="M29 8h12v32l-12 4z" fill="#332820"/><path d="M32 17l3-3 3 6v11l-5 3z" fill="#d8b48a"/><path d="M23 17h4v18h-4z" fill="#a97f56"/>`),
};

const task: Record<string, unknown> = {
  notes: svg`<path d="M14 3l26 2-7 38-28-2z" fill="#8fd0e6" stroke="#3f6c83"/><path d="M40 5l4 3-8 38-3-3z" fill="#41535e"/><path d="M15 4h24" stroke="#d9e7ee" stroke-width="3" stroke-dasharray="2 2"/><path d="M17 9l20 2-18 28-12 1z" fill="#c9ecf6" opacity=".7"/>`,
  chrome,
  ie: svg`<g transform="translate(-3 -2) scale(1.14)">${ie}</g>`,
  tc: svg`<g transform="scale(1.5)">${badge}</g>`,
  excel: svg`<path d="M26 6h20v36H26z" fill="#fff"/><path d="M29 10h6v4h-6zM37 10h6v4h-6zM29 18h6v4h-6zM37 18h6v4h-6zM29 26h6v4h-6zM37 26h6v4h-6zM29 34h6v4h-6zM37 34h6v4h-6z" fill="#1e7145"/><path d="M1 6l26-5v46L1 42z" fill="#1e7145"/><text x="6" y="32" font-family="Liberation Sans, sans-serif" font-size="22" font-weight="700" fill="#fff">X</text>`,
  start: svg`<path d="M5 11l15-3v15H5zM22 7.500L42 4v19H22zM5 25h15v15L5 37zM22 25h20v19l-20-3.500z" fill="#fff"/>`,
  files: svg`<path d="M4 8h14l3 4h23v30H4z" fill="#f4d988" stroke="#c9a64c"/><path d="M8 6h8v4H8zM24 7h10v4H24zM36 10h8v4h-8z" fill="#4cae4a"/><path d="M34 7h6v5h-6z" fill="#d3402d"/><path d="M4 16h40v26H4z" fill="#fbeab2"/><path d="M10 43V30q14-8 28 0v13h-6V35H16v8z" fill="#8ccdf0" stroke="#4a94c3"/>`,
  snip: svg`<ellipse cx="24" cy="13" rx="17" ry="11" fill="#eef0f3" stroke="#c94a50" stroke-width="2"/><path d="M17 6l17 30M36 9L22 36" stroke="#99a3b2" stroke-width="3.500"/><ellipse cx="14" cy="30" rx="7" ry="5" fill="none" stroke="#c9323b" stroke-width="3"/><ellipse cx="37" cy="35" rx="6" ry="5" fill="none" stroke="#2c6aa8" stroke-width="3"/><path d="M28 34v12" stroke="#2c6aa8" stroke-width="3"/>`,
};

/* ---------- data ---------- */

type Node = [guides: string, box: string, icon: string, label: string, flag?: string];
const TREE: Node[] = [
  ["F", "-", "suite", "Project Suite 'KBS_news' (6 projects)"],
  ["|T", "", "ring", "CrossBrowserTesting"],
  ["|T", "+", "project", "A_KBS_Front", "bold"],
  ["|T", "+", "project", "B_KBS_Front_Weather"],
  ["|T", "+", "project", "C_KBS_News_MyPage"],
  ["|T", "+", "project", "D_KBS_News_Android"],
  ["|T", "+", "project", "E_KBS_News_iOS"],
  ["|L", "-", "project", "F_KBS_Mobile_Virtual_Browser"],
  ["| T", "+", "folder", "Advanced"],
  ["| T", "-", "keyFolder", "KeywordTests"],
  ["| |T", "", "keyPage", "A_VirtualBrowser_Open", "picked"],
  ["| |T", "", "keyPage", "F01_VB_Front"],
  ["| |T", "", "keyPage", "F02_VB_FOOTER_menu"],
  ["| |T", "", "keyPage", "F03_VB_Expand_menu"],
  ["| |T", "", "keyPage", "F04_VB_News_DetailView"],
  ["| |L", "", "keyPage", "Scenario_test"],
  ["| T", "", "mapping", "NameMapping"],
  ["| L", "+", "stores", "Stores"],
  ["L", "-", "suiteLog", "Project Suite Logs"],
  [" T", "", "ringLog", "CrossBrowserTesting Logs"],
  [" T", "", "projectLog", "A_KBS_Front Logs"],
  [" T", "", "projectLog", "B_KBS_Front_Weather Logs"],
  [" T", "", "projectLog", "C_KBS_News_MyPage Logs"],
  [" T", "", "projectLog", "D_KBS_News_Android Logs"],
  [" T", "", "projectLog", "E_KBS_News_iOS Logs"],
  [" L", "+", "projectLog", "F_KBS_Mobile_Virtual_Browser Logs"],
];

const CHECKPOINTS = [
  ["cpWizard", "Checkpoint Wizard"], ["cpXml", "XML Checkpoint"], ["cpFile", "File Checkpoint"],
  ["cpProp", "Property Checkpoint"], ["cpWeb", "Web Service Checkpoint"], ["cpAccess", "Web Accessibility Checkpoint"],
  ["cpCompare", "Web Comparison Checkpoint"], ["cpTable", "Table Checkpoint"], ["cpRegion", "Region Checkpoint"],
  ["cpMobile", "Mobile Checkpoint"], ["cpDb", "Database Table Checkpoint"], ["cmpFiles", "Compare Files"],
  ["cmpPics", "Compare Pictures"], ["cmpProps", "Compare Properties"], ["cpOcr", "OCR Checkpoint"],
];

const DESKTOP: [col: number, row: number, icon: string, label: string][] = [
  [1, 1, "pc", "내 PC"], [2, 1, "sta", "sta\nMessenger"], [3, 1, "web", "new 1"],
  [1, 2, "network", "네트워크"], [2, 2, "ppt", "Automotiv..."], [3, 2, "web", "new 2"],
  [1, 3, "user", "STA"], [2, 3, "tc14", "TestCompl...\n14"], [5, 3, "notes", "고도몰 주소"], [6, 3, "notes", "dfgsd"],
  [7, 3, "scan", "크기변환Sc...\n-11-24"], [9, 3, "excel", "사내\n주말교육 ..."], [10, 3, "excel", "통합테스트..."],
  [1, 4, "bin", "휴지통"], [2, 4, "excel", "1234"], [5, 4, "notes", "01.29"], [6, 4, "notes", "트렐로\n도움되..."],
  [9, 4, "web", "_ 쇼핑몰\n관리자 ..."], [10, 4, "folderShop", "_ 쇼핑몰\n관리자 - ..."],
  [1, 5, "control", "제어판"], [2, 5, "chrome", "Chrome"], [16, 5, "folderPhoto", "구렛나루"],
  [1, 6, "hancomP", "한컴\n개인정보탐..."], [2, 6, "npp", "Notepad++"], [5, 6, "folder", "KBS_news"],
  [6, 6, "folder", "KBS_news -\n재수정"], [7, 6, "folder", "KBS_news -\n복사본"], [8, 6, "folderBlue", "KBS_news -\n재수정_ba..."],
  [10, 6, "folder", "KBS_news -\n복사본_ba..."], [11, 6, "folder", "KBS_news -\n재수정_ba..."],
  [1, 7, "hangul", "한컴오피스\n한글 2010"], [12, 7, "wide", "신청내역_..."], [15, 7, "scan", "진료기록"],
  [1, 8, "dict", "한컴 사전"], [1, 9, "tc12", "TestCompl...\n12"],
];

const MENUS: [string, string, string][] = [
  ["", "F", "ile"], ["", "E", "dit"], ["", "V", "iew"], ["Te", "s", "t"], ["", "D", "ebug"], ["", "T", "ools"], ["", "H", "elp"],
];

const BAR = "| New / open closeSuite / save . | undo redo / cut copy paste trash . | cubeAdd cubeSpy pageCheck v camera dbGear . | record v play Stop bugSpy . | pause / stepOver stepInto stepOut / calc / bugStop bugFind bugVar bugList Phone .";

/* ---------- shared pieces ---------- */

const shared = css`
  * { box-sizing: border-box; }
  .ico { display: block; flex: none; }
  button { font: inherit; color: inherit; background: none; border: 0; padding: 0; margin: 0; }
  .row { display: flex; }
  .latin { font-size: 12px; }
`;

@customElement("task-bar")
class TaskBar extends LitElement {
  static properties = { tray: { type: Boolean } };
  declare tray: boolean;

  static styles = [shared, css`
    :host { display: flex; height: 40px; flex: none; align-items: stretch; background: #6a7c94; border-top: 1px solid #55677f;
      font: 13px "Noto Sans CJK KR", sans-serif; color: #fff; }
    .quick { width: 58px; display: grid; place-items: center; }
    .quick:first-child { width: 51px; }
    .list { display: flex; gap: 4px; padding-left: 9px; }
    .app { width: 158px; display: flex; align-items: center; gap: 6px; padding: 0 7px; border: 1px solid #a3afbf;
      background: #8391a6; white-space: nowrap; text-align: left; margin-bottom: 1px; }
    .tray { margin-left: auto; display: flex; align-items: center; gap: 8px; padding-right: 17px; }
    .clock { width: 70px; text-align: center; line-height: 17px; margin-left: 5px; }
    .ime { font-size: 14px; margin-left: 4px; }
  `];

  render() {
    const apps = [["notes", "제목 없음 - 메모장"], ["chrome", "새 탭 - Chrome"], ["ie", "Web Service Che..."], ["tc", "TestComplete - C..."], ["excel", "JavaScriptFunctio..."]];
    return html`
      <button class="quick" aria-label="Start">${draw(task.start, 30, 48)}</button>
      <button class="quick" aria-label="Files">${draw(task.files, 34, 48)}</button>
      <button class="quick" aria-label="Snipping tool">${draw(task.snip, 34, 48)}</button>
      <nav class="list">${apps.map(([i, t]) => html`<button class="app">${draw(task[i], 32, 48)}<span class=${classMap({ latin: latin(t) })}>${t}</span></button>`)}</nav>
      ${this.tray ? this.renderTray() : nothing}`;
  }

  renderTray() {
    return html`<div class="tray">
      ${draw(svg`<path d="M1 1h14v14H1z" fill="#e0245e" stroke="#cfd6df" stroke-width="1.500"/><circle cx="8" cy="8" r="2.500" fill="none" stroke="#fff" stroke-width="2"/><path d="M8 3v2M8 11v2M3 8h2M11 8h2" stroke="#fff"/>`, 16)}
      ${draw(svg`<path d="M0 1h16v11H0z" fill="#8f9298" stroke="#1f2d6f"/><circle cx="8" cy="6" r="4" fill="none" stroke="#f00" stroke-width="2"/><path d="M5 3l6 6" stroke="#f00" stroke-width="2"/><path d="M1 15h5M10 15h5" stroke="#111c8a" stroke-width="1.500"/>`, 16)}
      ${draw(svg`<ellipse cx="8" cy="8" rx="6.500" ry="8" fill="#0e2b5f"/><path d="M5 5l6 6-3 2.500v-11L11 5l-6 6" fill="none" stroke="#fff" stroke-width="1.300"/>`, 16)}
      ${draw(svg`<rect width="16" height="16" rx="2" fill="#1b9be3"/><path d="M3 3h4M3 6h3M3 3v6h4M9 3l4 6M13 3L9 9M4 12h3M9 12h4" stroke="#fff" stroke-width="1.300"/><path d="M9 15h7v-4z" fill="#f0b03a"/>`, 16)}
      ${draw(svg`<path d="M1.500 1v15" stroke="#fff" stroke-width="2"/><path d="M3 2h5l1 2h5v7H3z" fill="#fff"/><circle cx="11.500" cy="11" r="4.500" fill="#d92b2b"/><path d="M9.500 9l4 4M13.500 9l-4 4" stroke="#fff" stroke-width="1.500"/>`, 16)}
      ${draw(svg`<path d="M8.500 2.500h5.500V15H8.500zM10 1h3" fill="#6a7c94" stroke="#fff" stroke-width="1.600"/><path d="M2.500 1v4M5.500 1v4M1 5h6v3H1zM4 8v7" stroke="#fff" fill="#fff"/>`, 16)}
      ${draw(svg`<path d="M1 14v-2M4 14v-4M7 14V8M10 14V5M13 14V3" stroke="#fff" stroke-width="2"/>`, 16)}
      ${draw(svg`<path d="M1 6h3l5-4v13l-5-4H1z" fill="#fff"/><circle cx="11.500" cy="11" r="4" fill="#fff" stroke="#d92b2b" stroke-width="1.800"/><path d="M9 8.500l5 5" stroke="#d92b2b" stroke-width="1.800"/>`, 16)}
      <span class="ime">가</span>
      <div class="clock">오전 9:34<br>2019-02-14</div>
    </div>`;
  }
}

@customElement("app-root")
class AppRoot extends LitElement {
  static styles = [shared, css`
    :host { display: flex; flex-direction: column; min-height: 100vh; overflow: hidden; color: #000;
      font: 11px/13px "DejaVu Sans Condensed", "Noto Sans", sans-serif; }
    .screen { flex: 1 0 auto; min-height: 50vh; display: flex; flex-direction: column; position: relative; }
    .ui { font: 12px/16px "Open Sans", "Noto Sans", sans-serif; }
    .ko { font-family: "Noto Sans CJK KR", sans-serif; }

    /* browser behind */
    .browser { flex: 1; background: #fff; position: relative; }
    .strip { height: 34px; background: #ebebeb; border-bottom: 1px solid #a2a2a2; display: flex; align-items: flex-start; padding-left: 8px; }
    .btab { width: 240px; height: 34px; border: 1px solid #a2a2a2; border-bottom: 0; border-radius: 8px 8px 0 0; background: #fff;
      display: flex; align-items: center; justify-content: space-between; padding: 0 9px 2px 12px; font-size: 13px; color: #5f6368; }
    .newtab { margin: 9px 0 0 16px; }
    .wctl { margin-left: auto; display: flex; align-items: flex-start; padding-right: 3px; }
    .wctl button { height: 19px; width: 28px; display: grid; place-items: center; }
    .wctl .x { width: 45px; background: #bcbcbc; }
    .bnav { height: 69px; padding: 12px 0 0 15px; border-bottom: 1px solid #c4c4c4; display: flex; flex-direction: column; gap: 18px; }
    .bmark { height: 45px; border-bottom: 1px solid #a0a0a0; box-shadow: 0 3px 4px #ccc; padding: 13px 16px; font-size: 13px; line-height: 18px; color: #555; }

    /* main window */
    .win { position: absolute; inset: 36px 10px 14px 40px; border: 1px solid #cfcfcf; background: #ebebeb; padding: 0 7px 7px;
      display: flex; flex-direction: column; outline: 2px solid #fff; }
    .title { height: 29px; display: flex; align-items: center; position: relative; padding-left: 2px; flex: none; }
    .title h1 { flex: 1; margin: 0; font-size: 15px; font-weight: 400; text-align: center; color: #333; padding-right: 18px; }
    .client { flex: 1; display: flex; flex-direction: column; background: #f0f0f0; min-height: 0; border: solid #d9d9d9; border-width: 1px 1px 1px 0; }
    .menu { height: 25px; background: #f5f6f8; border-bottom: 1px solid #999; display: flex; align-items: center; flex: none; }
    .menu .entry { padding: 0 5px; }
    .bar { height: 36px; background: #f5f6f8; border-bottom: 1px solid #e3e3e3; display: flex; align-items: center; flex: none; }
    .grip { width: 10px; align-self: stretch; margin: 4px 0; flex: none; background: radial-gradient(circle, #b4b4b4 1px, transparent 2px) center / 4px 5px repeat-y; }
    .sep { width: 4px; align-self: stretch; margin: 4px 0; flex: none; background: linear-gradient(#8c8c8c, #8c8c8c) center / 1px 100% no-repeat; }
    .tb { width: 32px; height: 32px; display: grid; place-items: center; flex: none; }
    .tb.on { background: #b9d7f8; border: 1px solid #4a90e0; }
    .ovf { width: 13px; align-self: stretch; display: grid; place-items: end center; padding-bottom: 5px; flex: none; }
    .drop { width: 24px; display: grid; place-items: center; flex: none; }
    .wide { display: flex; align-items: center; white-space: nowrap; gap: 4px; }
    .new { width: 45px; justify-content: center; }
    .stopb { width: 64px; padding-left: 7px; }
    .phoneb { padding: 0 2px 0 6px; }
    .bellb { margin-left: auto; padding-right: 8px; align-self: flex-end; }

    .tabs { display: flex; align-items: flex-end; flex: none; }
    .tab { border: 1px solid #a9a9a9; background: #e8e8e8; padding: 0 3px 0 4px; height: 17px; display: flex; align-items: center; gap: 5px; white-space: nowrap; }
    .tab + .tab { margin-left: -1px; }
    .tab.cur { background: #fff; }
    .top { height: 23px; padding-top: 3px; margin-bottom: -1px; position: relative; }
    .top .tab { height: 18px; }
    .top .tab.cur { height: 20px; border-bottom: 0; padding: 0 5px; }

    .bench { flex: 1; min-height: 0; display: grid; grid-template-columns: 234px minmax(0, 1fr); grid-template-rows: minmax(0, 1fr); gap: 4px; background: #fff; padding: 2px 2px 0;
      margin-right: 2px; border: 1px solid #a9a9a9; }
    .head { height: 22px; background: linear-gradient(#bccbdb, #d4e1ef); display: flex; align-items: center; padding: 0 5px 0 3px; gap: 2px; flex: none; }
    .head b { font-weight: 400; flex: 1; padding-left: 1px; white-space: nowrap; }
    .hb { width: 27px; height: 16px; border: 1px solid #8ba3c4; border-radius: 2px; background: linear-gradient(#cddaea, #bccbdd); display: grid; place-items: center; }
    .pin { width: 27px; display: grid; place-items: center; }

    .explorer { display: flex; flex-direction: column; min-height: 0; padding-bottom: 2px; }
    .explorer .bar { height: 34px; border: 0; margin-bottom: 1px; }
    .tree { flex: 1; min-height: 0; border: 1px solid #828790; background: #fff; display: flex; flex-direction: column; }
    .nodes { flex: 1; overflow: hidden; padding-top: 1px; }
    .node { display: flex; height: 19px; align-items: center; white-space: nowrap; }
    .cell { width: 19px; height: 19px; flex: none; display: grid; place-items: center; }
    .lab { padding: 0 0 0 1px; height: 19px; line-height: 19px; margin-left: -1px; border: 1px solid transparent; display: flex; align-items: center; }
    .lab.bold { font-weight: 700; }
    .lab.picked { flex: 1; background: #efefef; border: 1px dotted #333; border-right: 0; }
    .hscroll { height: 17px; background: #f0f0f0; display: grid; grid-template-columns: 17px 182px 1fr 17px; place-items: center; flex: none; }
    .thumb { background: #cdcdcd; width: 100%; height: 100%; }

    .right { display: flex; flex-direction: column; min-width: 0; min-height: 0; gap: 5px; }
    .space { flex: 1; display: flex; flex-direction: column; background: #f0f0f0; min-height: 0; }
    .doctabs { height: 27px; display: flex; align-items: flex-end; padding-right: 3px; margin-bottom: -1px; position: relative; flex: none; }
    .doctab { width: 169px; height: 24px; background: #fff; border: 1px solid #a9a9a9; border-bottom: 0; display: flex; align-items: center; padding-left: 5px; gap: 6px; }
    .chev { width: 16px; height: 16px; border: 1px solid #acacac; background: #eee; display: grid; place-items: center; margin: 0 0 4px auto; }
    .doc { flex: 1; min-height: 0; border: 1px solid #a9a9a9; background: #fff; padding: 2px; display: flex; flex-direction: column; margin-right: 2px; }
    .inner { flex: 1; min-height: 0; border: 1px solid #a9a9a9; background: #f0f0f0; padding: 1px 1px 3px; display: flex; gap: 4px; margin-right: 2px; }
    .ops { width: 227px; display: flex; flex-direction: column; background: #fff; min-height: 0; flex: none; }
    .search { height: 21px; margin: 3px 0; border: 1px solid #828790; display: flex; align-items: center; padding: 1px 1px 1px 2px; background: #fff; flex: none; }
    .search input { flex: 1; min-width: 0; border: 0; outline: 0; padding: 0; font: italic 11px "DejaVu Sans Condensed", "Noto Sans", sans-serif; background: none; }
    .search input::placeholder { color: #444; opacity: 1; }
    .search .dd { width: 15px; height: 17px; margin-left: 3px; border: 1px solid #ccc; background: #f0f0f0; display: grid; place-items: center; }
    .lib { flex: 1; min-height: 0; border: 1px solid #828790; display: flex; padding: 2px 1px 1px; }
    .cats { flex: 1; overflow: hidden; }
    .cat { display: block; width: 100%; height: 17px; text-align: left; padding-left: 7px; background: #fcfcfc; border: solid #e0ecf8; border-width: 0 1px 1px 0; }
    .items { padding: 0 0 4px 5px; }
    .item { display: flex; align-items: center; gap: 5px; height: 23px; width: 100%; text-align: left; white-space: nowrap; }
    .vscroll { width: 16px; margin: 0 1px; background: #f0f0f0; display: grid; grid-template-rows: 18px 376px 1fr 18px; place-items: center; }

    .stepsp { flex: 1; min-width: 0; display: flex; flex-direction: column; }
    .stepsp .bar { height: 36px; margin-bottom: 4px; color: #808080; }
    .stepsp .wide { gap: 0; padding-right: 1px; }
    .gridbox { flex: 1; border: 1px solid #828790; background: #fff; overflow: hidden; }
    table { border-collapse: collapse; table-layout: fixed; width: 100%; }
    th { font-weight: 400; text-align: left; height: 19px; background: #fcfcfc; border: solid #e6eef7; border-width: 0 1px 1px 0; padding: 0 3px; }
    td { height: 19px; padding: 0 2px; white-space: nowrap; }
    td.hd { background: #f0f0f0; border: solid #a0a0a0; border-width: 0 1px 1px 0; }
    td .row { align-items: center; gap: 2px; }
    .c0 { width: 32px; } .c1 { width: 317px; } .c2 { width: 336px; } .c3 { width: 333px; }

    .under { height: 28px; background: #f0f0f0; align-items: flex-start; padding: 0; }
    .under .tab { height: 19px; padding: 0 4px; gap: 4px; }
    .under .tab.cur { height: 22px; border-top: 0; padding: 2px 6px 0 5px; gap: 5px; }
    .stack { height: 187px; flex: none; border: solid #a9a9a9; border-width: 1px 1px 0; padding: 2px 2px 0; background: #fff; display: flex; flex-direction: column; margin-right: 2px; }
    .stackbox { flex: 1; border: 1px solid #828790; margin-bottom: 3px; }
    .stackhead { height: 19px; line-height: 19px; background: #fcfcfc; border-bottom: 1px solid #dfeaf8; padding-left: 3px; }
    .stack .under { height: 24px; border-top: 1px solid #a9a9a9; margin: 0 -2px; }
    .stack .under .tab { height: 17px; margin-top: -1px; padding: 0 3px; }
    .stack .under .tab.cur { height: 19px; border-top: 0; padding: 0 5px; margin-left: -1px; }

    .foot { height: 24px; padding-top: 5px; background: #fff; display: flex; align-items: stretch; flex: none; }
    .foot .tab { height: 19px; background: #f0f0f0; padding: 0 8px; color: #9b9b9b; }
    .foot .tab:first-child { padding: 0 6px; }
    .foot .tab:last-child { color: #000; padding: 0 6px; }
    .status { height: 20px; border-top: 1px solid #d4d4d4; display: flex; align-items: stretch; flex: none; line-height: 19px; color: #9b9b9b; }
    .status span { border-right: 1px solid #d4d4d4; width: 54px; }
    .status .locks { width: 97px; display: flex; justify-content: space-between; padding: 0 5px 0 3px; }
    .status .locks em { font-style: normal; }
    .status .num { color: #000; }
    .status .end { width: 34px; }
    .status .size { margin-left: auto; align-self: flex-end; }

    /* overlays on top of the window */
    .player { position: absolute; top: 24px; right: 9px; width: 103px; height: 41px; border: 1px solid #b0b0b0; border-radius: 4px; background: #f3f3f3;
      display: flex; align-items: center; padding-left: 3px; z-index: 2; }
    .player i { width: 1px; height: 35px; background: #bbb; margin: 0 9px 0 4px; }
    .player .p2 { margin-left: 9px; }
    .tip { position: absolute; top: 67px; right: 9px; width: 162px; border: 1px solid #767676; background: #fff; z-index: 2; text-align: right; padding: 3px 3px 5px; white-space: nowrap; }
    .tip div { padding: 0 4px 0 0; height: 16px; line-height: 16px; }
    .tip div + div { border-top: 1px solid #000; line-height: 14px; padding: 0 1px 0 0; }
    .tail { position: absolute; top: 60px; right: 12px; z-index: 3; }
    .cursor { position: absolute; top: 525px; left: 57%; z-index: 2; }

    /* desktop */
    .desk { flex: 1; background: #0a3a75; display: grid; grid-template-columns: repeat(auto-fill, 76px); grid-auto-rows: 104px; padding-top: 7px; align-content: start; }
    .di { display: flex; flex-direction: column; align-items: center; color: #fff; font: 13px/15px "Noto Sans CJK KR", sans-serif; text-shadow: 0 1px 2px #000; white-space: nowrap; text-align: center; text-decoration: none; }
    .di .ico { margin-bottom: 2px; }
    .di span { line-height: 15px; }
  `];

  caret = (c = "#111") => draw(svg`<path d="M0 1h7L3.500 5z" fill=${c}/>`, 7);

  headButton(kind: string) {
    const glyph: Record<string, unknown> = {
      q: svg`<text x="2.500" y="9.500" font-family="Liberation Sans, sans-serif" font-size="12" font-weight="700" fill="#fff" stroke="#47536b" stroke-width=".8">?</text>`,
      max: svg`<path d="M1.500 1.500h8v8h-8z" fill="#fff" stroke="#47536b"/><path d="M4 4.500h3v2H4z" fill="#fff" stroke="#47536b"/>`,
      dup: svg`<path d="M3.500 1.500h7v5h-7z M1.500 4.500h6v5h-6z" fill="#fff" stroke="#47536b"/>`,
      x: svg`<path d="M2 2l7 7M9 2L2 9" stroke="#47536b" stroke-width="4"/><path d="M2.500 2.500l6 6M8.500 2.500l-6 6" stroke="#fff" stroke-width="1.800"/>`,
    };
    if (kind === "pin") return html`<button class="pin" aria-label="Auto hide">${draw(small.pin, 14, 16)}</button>`;
    return html`<button class="hb" aria-label=${kind}>${draw(glyph[kind], 11)}</button>`;
  }

  head(icon: string, text: string, buttons: string[]) {
    return html`<header class="head">${icon ? draw(small[icon], 16) : nothing}<b>${text}</b>${buttons.map((b) => this.headButton(b))}</header>`;
  }

  toolItem(t: string): TemplateResult {
    switch (t) {
      case "|": return html`<span class="grip"></span>`;
      case "/": return html`<span class="sep"></span>`;
      case ".": return html`<span class="ovf">${this.caret()}</span>`;
      case "v": return html`<button class="drop" aria-label="More">${this.caret("#555")}</button>`;
      case "New": return html`<button class="wide new ui"><span><u>N</u>ew</span>${this.caret()}</button>`;
      case "Stop": return html`<button class="wide stopb ui">${draw(tool.stop, 24)}Stop</button>`;
      case "Phone": return html`<button class="wide phoneb ui">${draw(tool.phone, 24)}Show Mobile Screen</button>`;
    }
    return html`<button class=${classMap({ tb: true, on: t === "bugSpy" })} aria-label=${t}>${draw(tool[t], 24)}</button>`;
  }

  guide(ch: string, box: string) {
    const v = { "|": "M9.500 0v19", T: "M9.500 0v19", L: "M9.500 0v10", F: "M9.500 9v10" }[ch] ?? "";
    const h = ch === " " || ch === "|" ? "" : "M10 9.500h9";
    return draw(svg`<path d="${v}${h}" stroke="#8c8c8c" stroke-dasharray="1 1" fill="none"/>
      ${box ? svg`<rect x="5.500" y="5.500" width="8" height="8" rx="1" fill="#fff" stroke="#919191"/><path d="M7 9.500h5${box === "+" ? "M9.500 7v5" : ""}" stroke="#2b4aa8"/>` : nothing}`, 19);
  }

  renderTree() {
    return html`<div class="nodes" role="tree">${TREE.map(([g, box, icon, label, flag]) => html`
      <div class="node" role="treeitem">
        ${[...g].map((ch, i) => html`<span class="cell">${this.guide(ch, i === g.length - 1 ? box : "")}</span>`)}
        <span class="cell">${draw(small[icon], 16)}</span>
        <span class=${classMap({ lab: true, bold: flag === "bold", picked: flag === "picked" })}>${label}</span>
      </div>`)}</div>`;
  }

  arrow(d: string) {
    return draw(svg`<path d=${d} fill="none" stroke="#505050" stroke-width="2"/>`, 10);
  }

  renderOps() {
    const cat = (t: string) => html`<button class="cat">${t}</button>`;
    return html`<section class="ops">
      ${this.head("", "Operations", ["pin"])}
      <div class="search"><input type="text" placeholder="Search" aria-label="Search operations">${draw(small.lens, 16)}
        <button class="dd" aria-label="Search options">${this.caret("#888")}</button></div>
      <div class="lib">
        <div class="cats">
          ${["Frequently Used", "Test Actions", "Logging", "Web", "Checkpoints"].map(cat)}
          <div class="items">${CHECKPOINTS.map(([i, t]) => html`<button class="item">${draw(small[i], 16)}${t}</button>`)}</div>
          ${["Mobile", "Statements"].map(cat)}
        </div>
        <div class="vscroll">${this.arrow("M1 7l4-4 4 4")}<span class="thumb"></span><span></span>${this.arrow("M1 3l4 4 4-4")}</div>
      </div>
    </section>`;
  }

  renderSteps() {
    const wide = (i: string, t: string) => html`<button class="wide ui"><span class="tb">${draw(tool[i], 24)}</span>${t}</button>`;
    const link = (d: string) => draw(svg`<path d=${d} stroke="#8c8c8c" stroke-dasharray="1 1" fill="none"/>`, 18);
    return html`<section class="stepsp">
      <div class="bar">
        ${this.toolItem("|")}${wide("record", "Record New Test")}${wide("append", "Append to Test")}${wide("pageRun", "Run Test")}${this.toolItem("/")}
        ${wide("varAdd", "Add Variable")}${wide("parAdd", "Add Parameter")}${this.toolItem("/")}
        ${["up", "down", "left", "right", "/", "pageTalk"].map((t) => this.toolItem(t))}
      </div>
      <div class="gridbox"><table>
        <colgroup><col class="c0"><col class="c1"><col class="c2"><col class="c3"><col></colgroup>
        <thead><tr><th></th><th>Item</th><th>Operation</th><th>Value</th><th>Description</th></tr></thead>
        <tbody>
          <tr><td class="hd"></td><td><div class="row">${link("M9.500 18V9.500H18")}${draw(small.rowWeb, 16)}Run Virtual Browser</div></td>
            <td>Samsung Galaxy S5</td><td>Project.Variables.Main_URL, ...</td><td>Launches the specified virtual browser and opens the specified UR...</td></tr>
          <tr><td class="hd"></td><td><div class="row">${link("M9.500 0V9.500H18")}${draw(small.rowScript, 16)}Run Script Routine</div></td>
            <td>Unit1 - recoBrowser</td><td></td><td>Runs a script routine.</td></tr>
        </tbody>
      </table></div>
    </section>`;
  }

  renderWindow() {
    return html`<section class="win">
      <div class="title">${draw(badge, 16, 32)}<h1 class="ko">TestComplete - C:₩Users₩STA₩Desktop₩KBS_news - 재수정₩KBS_news.pjs</h1></div>
      <div class="client">
        <nav class="menu ui"><span class="grip"></span>${MENUS.map(([a, u, b]) => html`<button class="entry">${a}<u>${u}</u>${b}</button>`)}<span class="ovf">${this.caret()}</span></nav>
        <div class="bar">${BAR.split(" ").map((t) => this.toolItem(t))}<button class="bellb" aria-label="Notifications">${draw(tool.bell, 24)}</button></div>
        <div class="tabs top"><button class="tab cur">Project Workspace</button><button class="tab">Object Browser</button></div>
        <main class="bench">
          <aside class="explorer">
            ${this.head("explorer", "Project Explorer", ["q", "max", "pin", "x"])}
            <div class="bar">${"| suiteAdd itemAdd itemOpen / suiteSteps / suiteRun flowRun .".split(" ").map((t) => this.toolItem(t))}</div>
            <div class="tree">${this.renderTree()}
              <div class="hscroll">${this.arrow("M7 1L3 5l4 4")}<span class="thumb"></span><span></span>${this.arrow("M3 1l4 4-4 4")}</div>
            </div>
          </aside>
          <div class="right">
            <section class="space">
              ${this.head("edit", "Workspace", ["q", "max", "x"])}
              <div class="doctabs"><div class="doctab">${draw(small.keyPage, 16)}A_VirtualBrowser_Open
                <button aria-label="Close tab">${draw(svg`<path d="M1 1l8 8M9 1L1 9" stroke="#8a8a8a" stroke-width="2.400"/>`, 10)}</button></div>
                <button class="chev" aria-label="Open documents">${this.arrow("M2 3l3 4 3-4")}</button></div>
              <div class="doc">
                <div class="inner">${this.renderOps()}${this.renderSteps()}</div>
                <div class="tabs under"><button class="tab cur">${draw(small.steps, 16)}Test Steps</button><button class="tab">${draw(small.vars, 16)}Variables</button><button class="tab">${draw(small.params, 16)}Parameters</button></div>
                ${this.head("visual", "Test Visualizer", ["dup"])}
              </div>
            </section>
            <section class="stack">
              ${this.head("bugList", "Call Stack", ["q", "pin", "x"])}
              <div class="stackbox"><div class="stackhead">Call Stack</div></div>
              <div class="tabs under"><button class="tab cur">Call Stack</button><button class="tab">Locals</button><button class="tab">Watch List</button><button class="tab">Breakpoints</button></div>
            </section>
          </div>
        </main>
        <div class="foot"><button class="tab">Bookmarks</button><button class="tab">Search/Replace Results</button><button class="tab">To Do</button></div>
        <footer class="status"><span></span><span></span><span class="locks"><em>CAPS</em><em class="num">NUM</em><em>SCRL</em></span><span class="end"></span>
          <div class="size">${draw(svg`<path d="M2 9h8M5 6h5M8 3h2" stroke="#b5b5b5" stroke-width="2" stroke-dasharray="2 1"/>`, 12)}</div></footer>
      </div>
    </section>`;
  }

  render() {
    return html`
      <section class="screen">
        <div class="browser">
          <div class="strip">
            <div class="btab ko"><span>새 탭</span>${draw(svg`<path d="M1 1l7 7M8 1L1 8" stroke="#5f6368" stroke-width="1.800"/>`, 9)}</div>
            <button class="newtab" aria-label="New tab">${draw(svg`<path d="M6.500 0v13M0 6.500h13" stroke="#5f6368" stroke-width="1.800"/>`, 13)}</button>
            <div class="wctl">
              <button aria-label="Minimize">${draw(svg`<path d="M2 9.500h9" stroke="#222" stroke-width="2"/>`, 12)}</button>
              <button aria-label="Restore">${draw(svg`<path d="M1.500 3.500h7v8h-7zM4 1h7v8" fill="none" stroke="#222" stroke-width="1.400"/>`, 12)}</button>
              <button class="x" aria-label="Close">${draw(svg`<path d="M1 1l7 7M8 1L1 8" stroke="#fff" stroke-width="1.800"/>`, 9)}</button>
            </div>
          </div>
          <div class="bnav">
            ${draw(svg`<path d="M14 7H2M8 1L2 7l6 6" fill="none" stroke="#b4b4b4" stroke-width="1.800"/>`, 14)}
            ${draw(svg`<path d="M0 2h14" stroke="#ea4335" stroke-width="3.500" stroke-dasharray="4 1"/><path d="M0 7h4" stroke="#34a853" stroke-width="3.500"/><path d="M5 7h4" stroke="#1a73e8" stroke-width="3.500"/><path d="M10 7h4" stroke="#fbbc05" stroke-width="3.500"/><path d="M0 12h4" stroke="#34a853" stroke-width="3.500"/><path d="M5 12h9" stroke="#fbbc05" stroke-width="3.500" stroke-dasharray="4 1"/>`, 14)}
          </div>
          <div class="bmark ko">지원</div>
          ${this.renderWindow()}
          <div class="player">${draw(badge, 32)}<i></i>${draw(tool.pause, 16, 24)}<span class="p2">${draw(tool.stop, 16, 24)}</span></div>
          <div class="tip"><div>Playback</div><div>F_KBS_Mobile_Virtual_Browser</div></div>
          <svg class="tail" width="10" height="9" aria-hidden="true"><path d="M0 8L7 1v7" fill="#fff" stroke="#767676"/></svg>
          <svg class="cursor" width="12" height="19" aria-hidden="true"><path d="M1 1v14l3-3 3 6 2-1-3-6h5z" fill="#fff" stroke="#000"/></svg>
        </div>
        <task-bar></task-bar>
      </section>
      <section class="screen">
        <div class="desk">${DESKTOP.map(([c, r, icon, label]) => html`<a class="di" href="#" style="grid-area:${r}/${c}">${draw(big[icon], 48)}${label.split("\n").map((l) => html`<span class=${classMap({ latin: latin(l) })}>${l}</span>`)}</a>`)}</div>
        <task-bar tray></task-bar>
      </section>`;
  }
}
